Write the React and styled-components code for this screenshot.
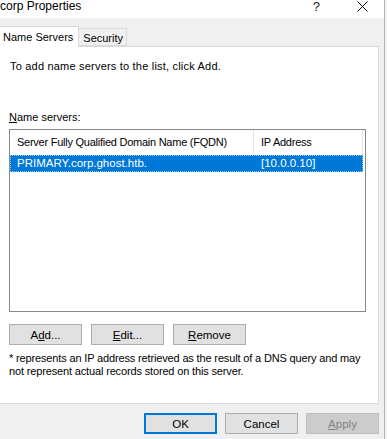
import React from "react";
import styled, { createGlobalStyle } from "styled-components";

const GlobalStyle = createGlobalStyle`
    html, body {
        margin: 0;
        padding: 0;
        background: #f0f0f0;
    }
    body {
        font-family: "Liberation Sans", Arial, sans-serif;
        font-size: 11px;
        color: #000;
    }
`;

const servers = [{ fqdn: "PRIMARY.corp.ghost.htb.", ip: "[10.0.0.10]" }];

export default function App() {
    return (
        <>
            <GlobalStyle />
            <Window>
                <TitleBar>
                    <Title>corp Properties</Title>
                    <TitleButtons>
                        <Help>?</Help>
                        <Close>
                            <svg width="11" height="11" viewBox="0 0 11 11">
                                <path
                                    d="M0.5 0.5 L10.5 10.5 M10.5 0.5 L0.5 10.5"
                                    stroke="#000"
                                    strokeWidth="1"
                                />
                            </svg>
                        </Close>
                    </TitleButtons>
                </TitleBar>

                <Body>
                    <Tabs>
                        <Tab $active>Name Servers</Tab>
                        <Tab>Security</Tab>
                    </Tabs>

                    <Panel>
                        <Intro>To add name servers to the list, click Add.</Intro>
                        <Label>
                            <u>N</u>ame servers:
                        </Label>

                        <ListBox>
                            <HeaderRow>
                                <HeaderCell $w={244}>
                                    Server Fully Qualified Domain Name (FQDN)
                                </HeaderCell>
                                <HeaderCell $w={109}>IP Address</HeaderCell>
                            </HeaderRow>
                            {servers.map((s) => (
                                <Row key={s.fqdn} $selected>
                                    <Cell $w={244}>{s.fqdn}</Cell>
                                    <Cell $w={109}>{s.ip}</Cell>
                                </Row>
                            ))}
                        </ListBox>

                        <ButtonRow>
                            <Button>
                                A<u>d</u>d...
                            </Button>
                            <Button>
                                <u>E</u>dit...
                            </Button>
                            <Button>
                                <u>R</u>emove
                            </Button>
                        </ButtonRow>

                        <Note>
                            * represents an IP address retrieved as the result of a
                            DNS query and may not represent actual records stored on
                            this server.
                        </Note>
                    </Panel>

                    <Footer>
                        <Button $default>OK</Button>
                        <Button>Cancel</Button>
                        <Button $disabled>
                            <u>A</u>pply
                        </Button>
                    </Footer>
                </Body>
            </Window>
        </>
    );
}

const Window = styled.div`
    width: 384px;
    height: 439px;
    background: #f0f0f0;
    border-right: 1px solid #b4b4b4;
    display: flex;
    flex-direction: column;
    overflow: hidden;
`;

const TitleBar = styled.div`
    height: 18px;
    background: #fff;
    display: flex;
    justify-content: space-between;
    align-items: flex-start;
`;

const Title = styled.div`
    font-size: 12px;
    line-height: 12px;
`;

const TitleButtons = styled.div`
    display: flex;
    align-items: flex-start;
    gap: 37px;
    padding-right: 16px;
`;

const Help = styled.span`
    font-size: 13px;
    line-height: 13px;
    color: #222;
`;

const Close = styled.span`
    display: flex;
    margin-top: 1px;
`;

const Body = styled.div`
    flex: 1;
    display: flex;
    flex-direction: column;
    padding-top: 8px;
`;

const Tabs = styled.div`
    display: flex;
    align-items: flex-end;
    height: 20px;
    position: relative;
    z-index: 1;
`;

const Tab = styled.div`
    box-sizing: border-box;
    height: ${(p) => (p.$active ? "21px" : "18px")};
    margin-bottom: ${(p) => (p.$active ? "-1px" : "0")};
    padding: ${(p) => (p.$active ? "4px 5px 0 3px" : "3px 3px 0 4px")};
    background: ${(p) => (p.$active ? "#fff" : "#f0f0f0")};
    border: 1px solid #d9d9d9;
    border-left: ${(p) => (p.$active ? "none" : "1px solid #d9d9d9")};
    border-bottom: ${(p) => (p.$active ? "none" : "1px solid #d9d9d9")};
    margin-left: ${(p) => (p.$active ? "0" : "-1px")};
    font-size: 11px;
    line-height: 13px;
    white-space: nowrap;
`;

const Panel = styled.div`
    box-sizing: border-box;
    width: 379px;
    height: 358px;
    background: #fff;
    border: 1px solid #d9d9d9;
    border-left: none;
    padding: 12px 0 0 9px;
    display: flex;
    flex-direction: column;
`;

const Intro = styled.div`
    line-height: 14px;
    padding-left: 1px;
    letter-spacing: 0.2px;
`;

const Label = styled.div`
    margin-top: 37px;
    line-height: 14px;
`;

const ListBox = styled.div`
    box-sizing: border-box;
    margin-top: 5px;
    width: 357px;
    height: 183px;
    border: 1px solid #828790;
    background: #fff;
`;

const HeaderRow = styled.div`
    display: flex;
    height: 25px;
`;

const HeaderCell = styled.div`
    box-sizing: border-box;
    width: ${(p) => p.$w}px;
    padding: 5px 0 0 7px;
    border-right: 1px solid #e5e5e5;
    line-height: 14px;
    white-space: nowrap;
    letter-spacing: -0.25px;
`;

const Row = styled.div`
    display: flex;
    height: 17px;
    width: 353px;
    box-sizing: border-box;
    background: ${(p) => (p.$selected ? "#0078d7" : "transparent")};
    color: ${(p) => (p.$selected ? "#fff" : "#000")};
    outline: ${(p) => (p.$selected ? "1px dotted #9fc8ee" : "none")};
    outline-offset: -1px;
`;

const Cell = styled.div`
    box-sizing: border-box;
    width: ${(p) => p.$w}px;
    padding: 1px 0 0 7px;
    font-size: 11.5px;
    line-height: 14px;
    white-space: nowrap;
`;

const ButtonRow = styled.div`
    display: flex;
    gap: 9px;
    margin-top: 12px;
`;

const Button = styled.button`
    box-sizing: border-box;
    width: 73px;
    height: 21px;
    padding: 0;
    font-family: "Liberation Sans", Arial, sans-serif;
    font-size: 11.5px;
    line-height: 14px;
    background: ${(p) => (p.$disabled ? "#cccccc" : "#e1e1e1")};
    color: ${(p) => (p.$disabled ? "#838383" : "#000")};
    border: ${(p) =>
        p.$default
            ? "2px solid #0078d7"
            : p.$disabled
            ? "1px solid #bfbfbf"
            : "1px solid #adadad"};
    border-radius: 0;
`;

const Note = styled.div`
    margin-top: 7px;
    width: 360px;
    line-height: 13px;
    letter-spacing: -0.15px;
`;

const Footer = styled.div`
    display: flex;
    justify-content: flex-end;
    gap: 8px;
    width: 379px;
    margin-top: 9px;
`;
